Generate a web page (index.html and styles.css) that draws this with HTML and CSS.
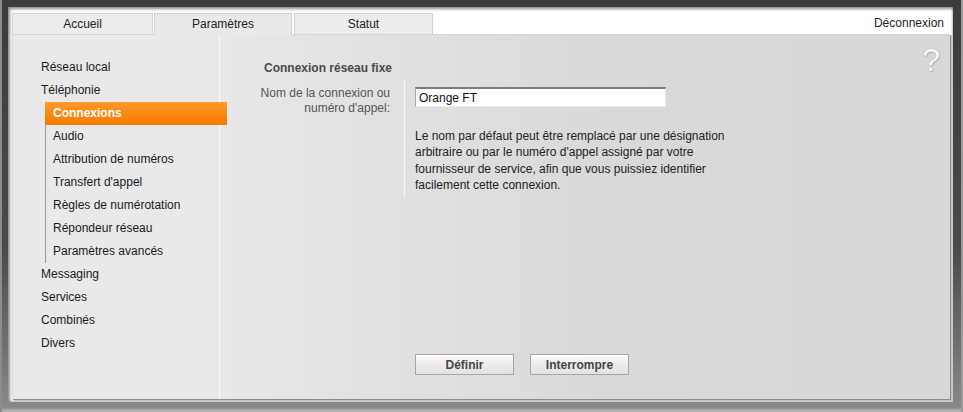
FILE: index.html
```html
<!DOCTYPE html>
<html lang="fr">
<head>
  <meta charset="UTF-8" />
  <title>Paramètres - Connexions</title>
  <link rel="stylesheet" href="styles.css">
</head>
<body>
  <div class="frame">
    <div class="window">
      <div class="topbar">
        <ul class="tabs">
          <li class="tab">Accueil</li>
          <li class="tab active">Paramètres</li>
          <li class="tab">Statut</li>
        </ul>
        <a class="logout" href="#">Déconnexion</a>
      </div>

      <div class="panel">
        <div class="help-icon">?</div>

        <ul class="sidebar">
          <li class="nav-item">Réseau local</li>
          <li class="nav-item">Téléphonie
            <ul class="subnav">
              <li class="sub-item current">Connexions</li>
              <li class="sub-item">Audio</li>
              <li class="sub-item">Attribution de numéros</li>
              <li class="sub-item">Transfert d'appel</li>
              <li class="sub-item">Règles de numérotation</li>
              <li class="sub-item">Répondeur réseau</li>
              <li class="sub-item">Paramètres avancés</li>
            </ul>
          </li>
          <li class="nav-item">Messaging</li>
          <li class="nav-item">Services</li>
          <li class="nav-item">Combinés</li>
          <li class="nav-item">Divers</li>
        </ul>

        <div class="main">
          <h2 class="section-title">Connexion réseau fixe</h2>

          <div class="form-row">
            <label class="field-label" for="connName">Nom de la connexion ou numéro d'appel:</label>
            <div class="field">
              <input type="text" id="connName" value="Orange FT" />
              <p class="hint">Le nom par défaut peut être remplacé par une désignation arbitraire ou par le numéro d'appel assigné par votre fournisseur de service, afin que vous puissiez identifier facilement cette connexion.</p>
            </div>
          </div>

          <div class="actions">
            <button type="button" class="btn">Définir</button>
            <button type="button" class="btn">Interrompre</button>
          </div>
        </div>
      </div>
    </div>
  </div>
</body>
</html>
```

FILE: styles.css
```css
html, body { margin: 0; padding: 0; }
body {
  font-family: "Liberation Sans", Arial, sans-serif;
  font-size: 12px;
  color: #222;
}
ul { list-style: none; margin: 0; padding: 0; }

.frame {
  width: 963px;
  height: 412px;
  box-sizing: border-box;
  padding: 7px 10px 10px 8px;
  background: linear-gradient(#3c3c3c, #4a4a4a 60%, #8a8a8a);
  box-shadow: inset 2px 0 0 #8c8c8c, inset -2px 0 0 #9a9a9a, inset 0 -3px 2px #b0b0b0;
}
.window {
  height: 100%;
  box-sizing: border-box;
  padding: 5px 3px 3px 4px;
  background: #fff;
  box-shadow: inset 2px 2px 3px rgba(0,0,0,0.45), inset -1px -1px 2px rgba(0,0,0,0.25);
  display: flex;
  flex-direction: column;
}

/* top tabs */
.topbar {
  display: flex;
  align-items: flex-end;
  height: 22px;
}
.tabs { display: flex; flex: 1; }
.tab {
  box-sizing: border-box;
  width: 141px;
  height: 21px;
  line-height: 20px;
  text-align: center;
  background: #ececec;
  border: 1px solid #d2d2d2;
  border-bottom: none;
}
.tab.active {
  width: 138px;
  height: 22px;
  line-height: 21px;
  margin: 0 0 -1px 1px;
  background: #e9e9e9;
  border-color: #cfcfcf;
  position: relative;
  z-index: 1;
}
.tab.active + .tab {
  width: 139px;
  margin-left: 2px;
}
.logout {
  color: #222;
  text-decoration: none;
  align-self: center;
  padding-right: 6px;
}

/* panel */
.panel {
  flex: 1;
  display: flex;
  position: relative;
  background: linear-gradient(to right, #e9e9e9 0, #e9e9e9 208px, #e7e7e7 220px, #d9d9d9 590px, #d8d8d8 100%);
  border-top: 1px solid #d6d6d6;
  border-left: 1px solid #dcdcdc;
  box-shadow: 1px 1px 0 #8c8c8c, 2px 2px 1px #c4c4c4;
}
.help-icon {
  position: absolute;
  top: 9px;
  right: 10px;
  font-size: 32px;
  line-height: 32px;
  color: #fafafa;
  text-shadow: 0 0 1px #999, 1px 1px 1px #b0b0b0;
}

.sidebar {
  width: 206px;
  flex: none;
  padding: 21px 0 0 0;
  border-right: 1px solid #fafafa;
  position: relative;
  z-index: 1;
}
.nav-item {
  line-height: 23px;
  padding-left: 28px;
  color: #1a1a1a;
}
.subnav {
  margin-left: 4px;
  border-left: 1px solid #9a9a9a;
}
.sub-item {
  height: 23px;
  line-height: 23px;
  padding-left: 7px;
  color: #1a1a1a;
}
.sub-item.current {
  margin-left: -1px;
  padding-left: 8px;
  margin-right: -8px;
  font-weight: bold;
  color: #fff;
  background: linear-gradient(#ff9a2e, #fb8a14 45%, #f47b00);
}

.main {
  flex: 1;
  display: flex;
  flex-direction: column;
  padding: 22px 0 24px 44px;
}
.section-title {
  margin: 0;
  font-size: 12px;
  line-height: 23px;
  color: #4a4a4a;
}
.form-row {
  display: flex;
}
.field-label {
  width: 137px;
  margin-left: -11px;
  padding: 6px 14px 0 0;
  text-align: right;
  line-height: 15px;
  color: #555;
}
.field {
  border-left: 1px solid #f6f6f6;
  padding: 7px 0 4px 10px;
}
.field input {
  display: block;
  width: 251px;
  height: 20px;
  box-sizing: border-box;
  margin: 0;
  padding: 1px 3px 0;
  font: inherit;
  color: #111;
  background: #fff;
  border: 1px solid;
  border-top-width: 2px;
  border-color: #7c7c7c #e6e6e6 #ececec #a9a9a9;
}
.hint {
  width: 340px;
  margin: 21px 0 0;
  line-height: 16.3px;
  color: #222;
}

.actions {
  margin-top: auto;
  padding-left: 151px;
  display: flex;
  gap: 16px;
}
.btn {
  width: 99px;
  height: 21px;
  padding: 0;
  font: inherit;
  font-weight: bold;
  color: #444;
  background: linear-gradient(#fafafa, #ececec 50%, #e2e2e2);
  border: 1px solid #a6a6a6;
  box-shadow: inset 0 1px 0 #fff;
  cursor: pointer;
}
```
